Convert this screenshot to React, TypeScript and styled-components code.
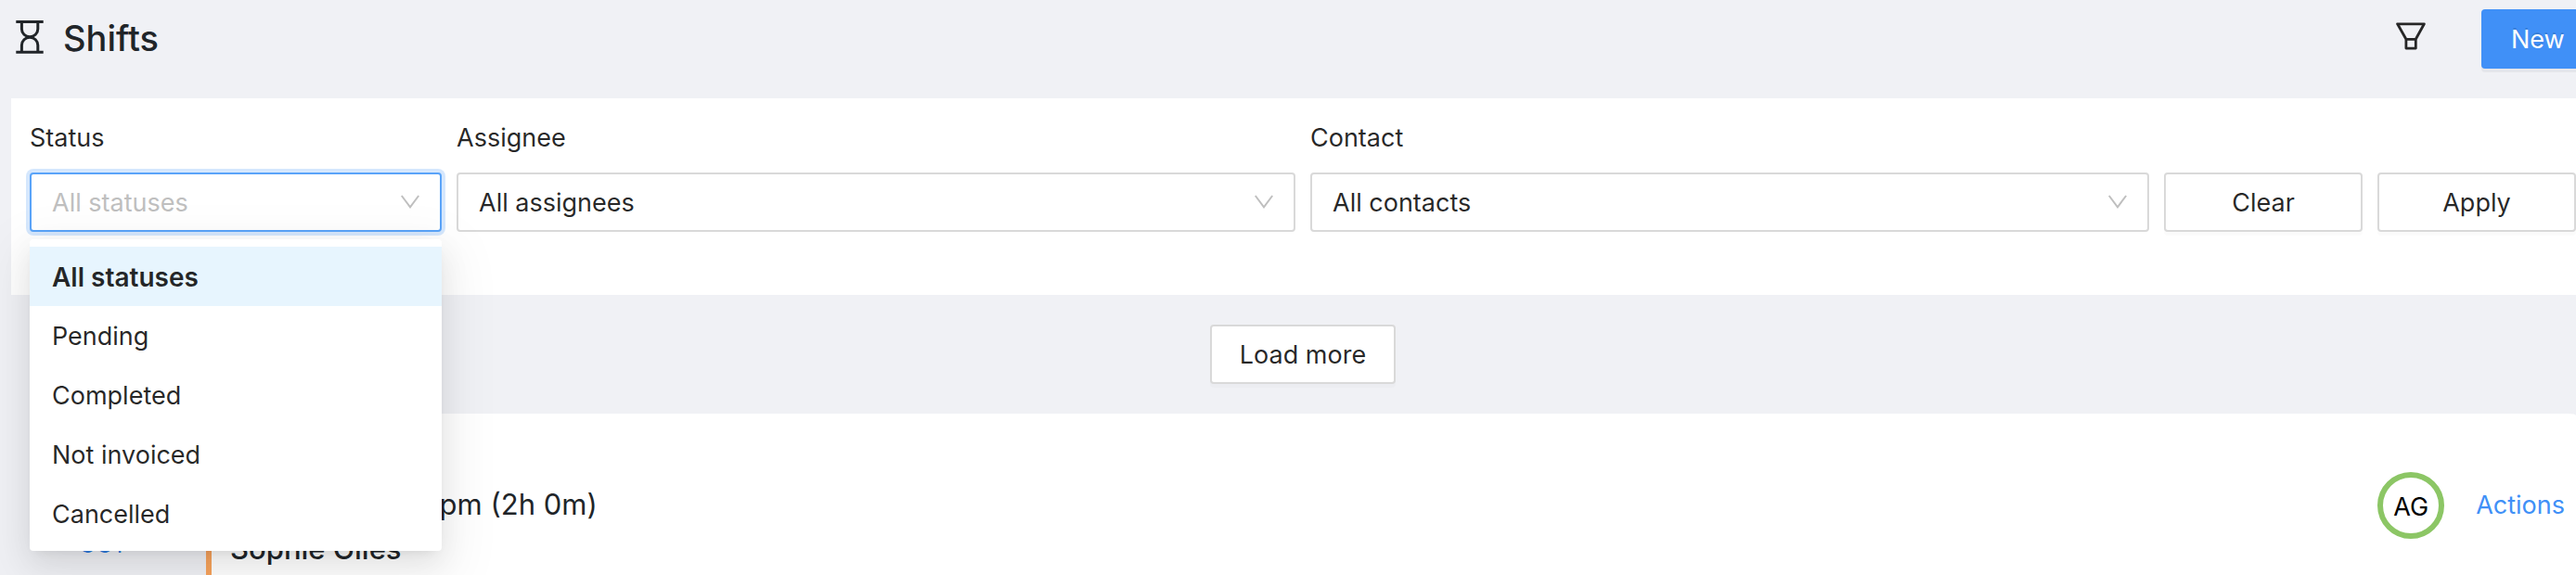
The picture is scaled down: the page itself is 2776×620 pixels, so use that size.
import React, { useState } from "react";
import styled, { createGlobalStyle, css } from "styled-components";

const GlobalStyle = createGlobalStyle`
  *, *::before, *::after { box-sizing: border-box; }
  body {
    margin: 0;
    background: #f0f1f5;
    color: rgba(0, 0, 0, 0.85);
    font-family: Inter, "Liberation Sans", sans-serif;
    font-size: 27px;
    line-height: 44px;
  }
  button, select, input { font: inherit; color: inherit; margin: 0; }
`;

const Page = styled.div`
  min-height: 100vh;
`;

const Header = styled.header`
  display: flex;
  align-items: flex-start;
  justify-content: space-between;
  height: 106px;
  padding: 10px 0 0 14px;
`;

const Heading = styled.div`
  display: flex;
  align-items: center;
  gap: 18px;
  height: 62px;
`;

const Title = styled.h1`
  margin: 0;
  font-size: 38px;
  line-height: 56px;
  font-weight: 500;
  color: #212529;
`;

const HeaderActions = styled.div`
  display: flex;
  align-items: center;
  gap: 60px;
  height: 64px;
`;

const IconButton = styled.button`
  display: flex;
  padding: 0;
  border: 0;
  background: none;
  cursor: pointer;
`;

const buttonBase = css`
  height: 64px;
  padding: 2px 30px 0;
  border-radius: 4px;
  white-space: nowrap;
  cursor: pointer;
`;

const PrimaryButton = styled.button`
  ${buttonBase}
  width: 102px;
  overflow: hidden;
  border: 2px solid #4090f7;
  border-right: 0;
  border-radius: 4px 0 0 4px;
  background: #4090f7;
  color: #fff;
  text-shadow: 0 -2px 0 rgba(0, 0, 0, 0.12);
  box-shadow: 0 4px 0 rgba(0, 0, 0, 0.045);
`;

const DefaultButton = styled.button`
  ${buttonBase}
  border: 2px solid #d9d9d9;
  background: #fff;
  box-shadow: 0 4px 0 rgba(0, 0, 0, 0.015);
`;

const Filters = styled.form`
  display: grid;
  grid-template-columns: 444fr 904fr 904fr 214fr 214fr;
  column-gap: 16px;
  align-items: end;
  height: 212px;
  margin-left: 12px;
  padding: 20px 0 68px 20px;
  background: #fff;
`;

const Field = styled.div`
  position: relative;
  display: flex;
  flex-direction: column;
  gap: 15px;
`;

const SelectBox = styled.div`
  position: relative;
`;

const Select = styled.select<{ $open?: boolean }>`
  display: block;
  appearance: none;
  width: 100%;
  height: 64px;
  padding: 2px 60px 0 22px;
  border: 2px solid ${(p) => (p.$open ? "#5aa4f9" : "#d9d9d9")};
  border-radius: 4px;
  outline: none;
  background: #fff;
  color: ${(p) => (p.$open ? "#bfbfbf" : "rgba(0, 0, 0, 0.85)")};
  box-shadow: ${(p) => (p.$open ? "0 0 0 4px rgba(64, 144, 247, 0.22)" : "none")};
`;

const Arrow = styled.svg`
  position: absolute;
  right: 24px;
  top: 24px;
  pointer-events: none;
`;

const Menu = styled.ul`
  position: absolute;
  z-index: 2;
  top: calc(100% + 8px);
  left: 0;
  right: 0;
  margin: 0;
  padding: 8px 0;
  list-style: none;
  border-radius: 4px;
  background: #fff;
  box-shadow:
    0 6px 12px -8px rgba(0, 0, 0, 0.12),
    0 12px 32px rgba(0, 0, 0, 0.08),
    0 18px 56px 16px rgba(0, 0, 0, 0.05);
`;

const Option = styled.li<{ $selected: boolean }>`
  padding: 11px 24px 9px;
  font-size: ${(p) => (p.$selected ? "28px" : "27px")};
  font-weight: ${(p) => (p.$selected ? 600 : 400)};
  background: ${(p) => (p.$selected ? "#e7f5fe" : "transparent")};
  cursor: pointer;
`;

const LoadMore = styled.div`
  display: flex;
  justify-content: center;
  padding: 32px 0;
  margin-left: 32px;
`;

const Day = styled.section`
  display: flex;
  align-items: flex-start;
`;

const DayLabel = styled.div`
  width: 222px;
  padding-top: 130px;
  text-align: center;
  font-size: 24px;
  line-height: 24px;
  color: #2f7de0;
`;

const Shift = styled.article`
  flex: 1;
  display: flex;
  justify-content: space-between;
  min-height: 174px;
  padding: 74px 12px 0 20px;
  border-left: 6px solid #f7a35c;
  border-top-right-radius: 8px 2px;
  background: #fff;
`;

const ShiftTime = styled.div`
  font-size: 31px;
  line-height: 48px;
  color: #212529;
`;

const ShiftName = styled(ShiftTime)`
  font-weight: 500;
`;

const ShiftSide = styled.div`
  display: flex;
  align-items: center;
  gap: 34px;
  height: 50px;
`;

const Avatar = styled.span`
  display: flex;
  align-items: center;
  justify-content: center;
  width: 72px;
  height: 72px;
  padding-top: 4px;
  border: 6px solid #8cc665;
  border-radius: 50%;
  color: #000;
`;

const ActionsLink = styled.a`
  color: #4090f7;
  text-decoration: none;
`;

const HourglassIcon = () => (
  <svg width="36" height="40" viewBox="0 0 36 40" fill="none" stroke="#212529" strokeWidth="3" aria-hidden="true">
    <path d="M3.300 2.600H32.700M3.300 35.300H32.700" />
    <path d="M9.400 2.600V10.200a8.700 8.500 0 0 0 17.400 0V2.600M9.400 35.300V27.800a8.700 8.500 0 0 1 17.400 0V35.300" />
  </svg>
);

const FunnelIcon = () => (
  <svg width="32" height="36" viewBox="0 0 32 36" fill="none" stroke="#262626" strokeWidth="2.800" strokeLinejoin="round" aria-hidden="true">
    <path d="M1.600 1.800H30.400L21.300 18.300V28.100H10.900V18.300Z M10.900 18.300H21.300" />
  </svg>
);

const ChevronIcon = () => (
  <Arrow width="20" height="16" viewBox="0 0 20 16" fill="none" stroke="#bfbfbf" strokeWidth="2" aria-hidden="true">
    <path d="M0.800 1L10 13.300L19.200 1" />
  </Arrow>
);

const STATUSES = ["All statuses", "Pending", "Completed", "Not invoiced", "Cancelled"];

type FilterSelectProps = { id: string; label: string; options: string[]; menu?: boolean };

function FilterSelect({ id, label, options, menu }: FilterSelectProps) {
  const [value, setValue] = useState(options[0]);
  return (
    <Field>
      <label htmlFor={id}>{label}</label>
      <SelectBox>
        <Select id={id} $open={menu} value={value} onChange={(e) => setValue(e.target.value)}>
          {options.map((o) => (
            <option key={o}>{o}</option>
          ))}
        </Select>
        <ChevronIcon />
      </SelectBox>
      {menu && (
        <Menu role="listbox" aria-label={label}>
          {options.map((o) => (
            <Option key={o} role="option" aria-selected={o === value} $selected={o === value} onClick={() => setValue(o)}>
              {o}
            </Option>
          ))}
        </Menu>
      )}
    </Field>
  );
}

export default function App() {
  return (
    <Page>
      <GlobalStyle />
      <Header>
        <Heading>
          <HourglassIcon />
          <Title>Shifts</Title>
        </Heading>
        <HeaderActions>
          <IconButton type="button" aria-label="Filter">
            <FunnelIcon />
          </IconButton>
          <PrimaryButton type="button">New</PrimaryButton>
        </HeaderActions>
      </Header>
      <main>
        <Filters onSubmit={(e) => e.preventDefault()}>
          <FilterSelect id="status" label="Status" options={STATUSES} menu />
          <FilterSelect id="assignee" label="Assignee" options={["All assignees"]} />
          <FilterSelect id="contact" label="Contact" options={["All contacts"]} />
          <DefaultButton type="reset">Clear</DefaultButton>
          <DefaultButton type="submit">Apply</DefaultButton>
        </Filters>
        <LoadMore>
          <DefaultButton type="button">Load more</DefaultButton>
        </LoadMore>
        <Day>
          <DayLabel>OCT</DayLabel>
          <Shift>
            <div>
              <ShiftTime>12:00pm – 2:00pm (2h 0m)</ShiftTime>
              <ShiftName>Sophie Giles</ShiftName>
            </div>
            <ShiftSide>
              <Avatar>AG</Avatar>
              <ActionsLink href="#actions">Actions</ActionsLink>
            </ShiftSide>
          </Shift>
        </Day>
      </main>
    </Page>
  );
}
